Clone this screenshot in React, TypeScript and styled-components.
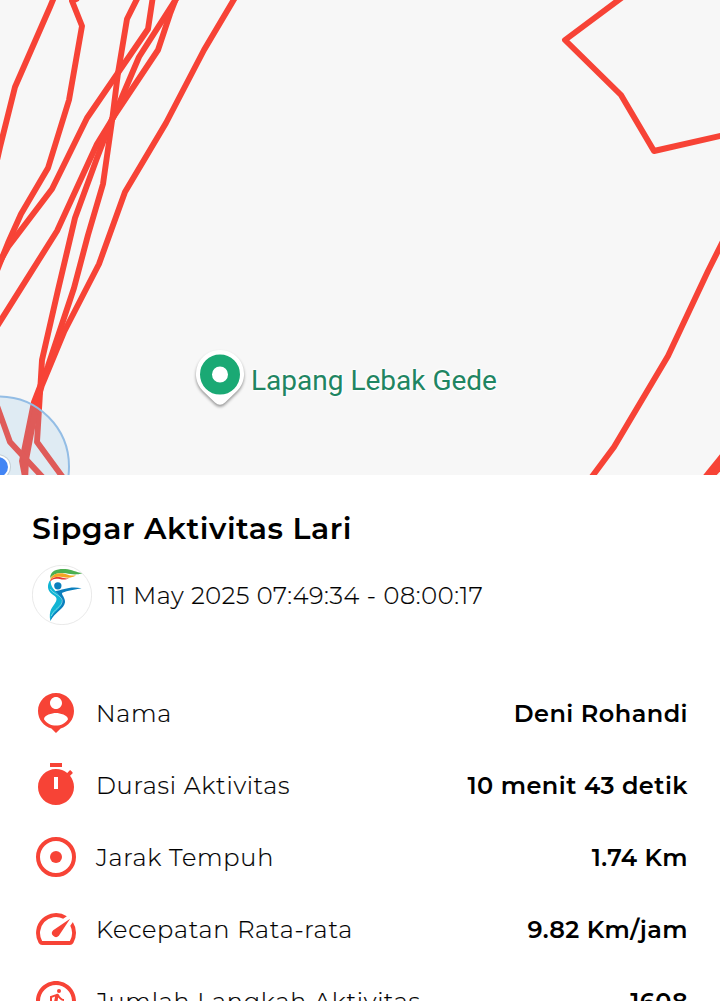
import React from 'react'
import styled, {createGlobalStyle} from 'styled-components'
import {MdOutlineRunCircle} from 'react-icons/md'

type StatT = {
	icon: React.ReactNode
	label: string
	value: string
}

const tracks = [
	'-4,165 0,147 15,87 50,7 55,-5',
	'78,-2 72,1 82,26 69,100 48,168 21,214 8,243 -4,273',
	'153,-4 148,29 87,118 52,189 8,247 -4,269',
	'139,-5 127,19 118,73 112,121 103,184 88,235 74,288 48,366 34,402 22,461 26,482',
	'178,-4 139,57 113,118 97,144 57,231 -4,328',
	'177,-4 170,14 158,50 112,119 97,158 75,218 58,290 42,360 37,442 67,483',
	'236,-4 204,50 166,123 125,192 99,264 64,332 42,385 37,402 26,460 25,482',
	'-4,403 10,442 48,483',
	'624,-4 565,40 621,95 654,151 724,135',
	'724,239 708,271 668,356 614,447 588,482',
	'724,454 703,480',
	'724,463 708,480',
]

const stats: StatT[] = [
	{
		icon: (
			<path d='M12 2c-4.97 0-9 4.03-9 9 0 4.17 2.84 7.67 6.69 8.69L12 22l2.31-2.31C18.16 18.67 21 15.17 21 11c0-4.97-4.03-9-9-9zm0 2c1.66 0 3 1.34 3 3s-1.34 3-3 3-3-1.34-3-3 1.34-3 3-3zm0 14.3c-2.5 0-4.71-1.28-6-3.22.03-1.99 4-3.08 6-3.08 1.99 0 5.97 1.09 6 3.08-1.29 1.94-3.5 3.22-6 3.22z' />
		),
		label: 'Nama',
		value: 'Deni Rohandi',
	},
	{
		icon: (
			<path d='M9 1h6v2H9zM19.03 7.39l1.42-1.42c-.45-.51-.9-.97-1.41-1.41L17.62 5.98C16.07 4.74 14.12 4 12 4c-4.97 0-9 4.03-9 9s4.02 9 9 9 9-4.03 9-9c0-2.12-.74-4.07-1.97-5.61zM13 14h-2V8h2v6z' />
		),
		label: 'Durasi Aktivitas',
		value: '10 menit 43 detik',
	},
	{
		icon: (
			<>
				<circle cx='12' cy='12' r='9' fill='none' stroke='currentColor' strokeWidth='2' />
				<circle cx='12' cy='12' r='3' />
			</>
		),
		label: 'Jarak Tempuh',
		value: '1.74 Km',
	},
	{
		icon: (
			<path d='M20.38 8.57l-1.23 1.85a8 8 0 01-.22 7.58H5.07A8 8 0 0115.58 6.85l1.85-1.23A10 10 0 003.35 19a2 2 0 001.72 1h13.85a2 2 0 001.74-1 10 10 0 00-.27-10.44zm-9.79 6.84a2 2 0 002.83 0l5.66-8.49-8.49 5.66a2 2 0 000 2.83z' />
		),
		label: 'Kecepatan Rata-rata',
		value: '9.82 Km/jam',
	},
	{
		icon: <MdOutlineRunCircle size={24} />,
		label: 'Jumlah Langkah Aktivitas',
		value: '1608',
	},
]

function Logo() {
	return (
		<LogoSvg viewBox='36 195 180 180'>
			<circle cx='126' cy='285' r='89' fill='#fff' stroke='#dedede' strokeWidth='2' />
			<path d='M90 234C92 210 112 206 136 207C156 208 168 217 187 220C168 226 154 223 138 220C118 216 100 221 90 234Z' fill='#4caf50' />
			<path d='M90 240C96 221 116 217 134 221C149 226 155 228 168 226C154 236 141 233 127 231C111 228 98 231 90 240Z' fill='#f5a623' />
			<path d='M89 246C93 232 109 229 122 232C132 235 137 236 147 235C138 240 128 239 119 237C105 234 97 237 89 246Z' fill='#e53935' />
			<circle cx='113.500' cy='257.500' r='11' fill='#0b7fbd' />
			<path d='M89 242C79 260 84 276 103 287C109 291 112 297 107 306C98 322 85 330 91 363C97 343 119 331 128 313C134 298 124 287 111 278C100 268 92 258 92 244Z' fill='#11b5d4' />
			<path d='M105 274C130 269 151 257 185 265C163 270 143 272 127 278C122 282 137 293 135 307C133 326 104 338 91 363C93 340 118 332 125 313C130 297 119 286 105 274Z' fill='#0b7fbd' />
			<path d='M91 267C97 281 125 286 127 302C127 320 100 328 94 348' fill='none' stroke='#fff' strokeWidth='1.300' />
		</LogoSvg>
	)
}

export default function App() {
	return (
		<Page>
			<GlobalStyle />
			<MapArea>
				<MapSvg viewBox='0 0 720 475'>
					{tracks.map((points, idx) => (
						<polyline key={idx} points={points} />
					))}
					<circle cx='-1' cy='466.500' r='70' fill='rgba(132, 192, 232, 0.2)' stroke='#93bde5' strokeWidth='2' />
					<circle cx='-2' cy='467' r='13' fill='#000' opacity='0.12' />
					<circle cx='-2' cy='467' r='12' fill='#fff' />
					<circle cx='-2' cy='467' r='10' fill='#4285f4' />
				</MapSvg>
				<Place>
					<PinSvg viewBox='0 0 56 64'>
						<path d='M28 4A24 24 0 0 0 11 45L23 56.500Q28 61 33 56.500L45 45A24 24 0 0 0 28 4Z' fill='#fff' />
						<circle cx='28' cy='28.500' r='14' fill='none' stroke='#1aa974' strokeWidth='12' />
					</PinSvg>
					<PlaceName>Lapang Lebak Gede</PlaceName>
				</Place>
			</MapArea>
			<Details>
				<Title>Sipgar Aktivitas Lari</Title>
				<When>
					<Logo />
					<DateText>11 May 2025 07:49:34 - 08:00:17</DateText>
				</When>
				<StatList>
					{stats.map(({icon, label, value}) => (
						<StatRow key={label}>
							<StatIcon viewBox='0 0 24 24'>{icon}</StatIcon>
							<Label>{label}</Label>
							<Value>{value}</Value>
						</StatRow>
					))}
				</StatList>
			</Details>
		</Page>
	)
}

const GlobalStyle = createGlobalStyle`
	body {
		margin: 0;
		background: #fff;
	}
`

const Page = styled.div`
	width: 720px;
	height: 1001px;
	overflow: hidden;
	display: flex;
	flex-direction: column;
	background: #fff;
	color: #000;
	font-family: Montserrat, Inter, sans-serif;
`

const MapArea = styled.div`
	position: relative;
	flex: none;
	height: 475px;
	overflow: hidden;
	background: #f7f7f7;
`

const MapSvg = styled.svg`
	display: block;
	width: 720px;
	height: 475px;

	polyline {
		fill: none;
		stroke: #f74336;
		stroke-width: 5.9;
		stroke-linejoin: round;
	}
`

const Place = styled.div`
	position: absolute;
	left: 192px;
	top: 346px;
	display: flex;
	align-items: center;
`

const PinSvg = styled.svg`
	width: 56px;
	height: 64px;
	filter: drop-shadow(0 2px 1.5px rgba(0, 0, 0, 0.4));
`

const PlaceName = styled.span`
	margin-left: 3px;
	padding-top: 5px;
	font-family: Roboto, sans-serif;
	font-size: 28px;
	line-height: 32px;
	white-space: nowrap;
	color: #1f8562;
	text-shadow: 0 0 3px #fff, 0 0 3px #fff, 1px 1px 2px #fff, -1px -1px 2px #fff;
`

const Details = styled.div`
	flex: none;
	display: flex;
	flex-direction: column;
	padding: 34px 32px 0;
`

const Title = styled.h1`
	margin: 0;
	font-size: 30px;
	font-weight: 600;
	line-height: 40px;
	letter-spacing: 0.55px;
	white-space: nowrap;
`

const When = styled.div`
	display: flex;
	align-items: center;
	gap: 16px;
	margin-top: 16px;
`

const LogoSvg = styled.svg`
	flex: none;
	width: 60px;
	height: 60px;
`

const DateText = styled.span`
	padding-top: 2px;
	font-size: 24px;
	font-weight: 300;
	line-height: 32px;
	letter-spacing: 0.68px;
	white-space: nowrap;
	-webkit-text-stroke: 0.2px #000;
`

const StatList = styled.div`
	display: flex;
	flex-direction: column;
	gap: 24px;
	margin-top: 64px;
`

const StatRow = styled.div`
	display: flex;
	align-items: center;
	height: 48px;
`

const StatIcon = styled.svg`
	flex: none;
	width: 48px;
	height: 48px;
	margin-right: 16px;
	color: #f74336;
	fill: currentColor;
`

const Label = styled.span`
	padding-top: 2px;
	font-size: 24px;
	font-weight: 300;
	line-height: 32px;
	letter-spacing: 0.76px;
	white-space: nowrap;
	-webkit-text-stroke: 0.2px #000;
`

const Value = styled.span`
	margin-left: auto;
	padding-top: 2px;
	font-size: 24px;
	font-weight: 600;
	line-height: 32px;
	letter-spacing: 0.46px;
	white-space: nowrap;
`
